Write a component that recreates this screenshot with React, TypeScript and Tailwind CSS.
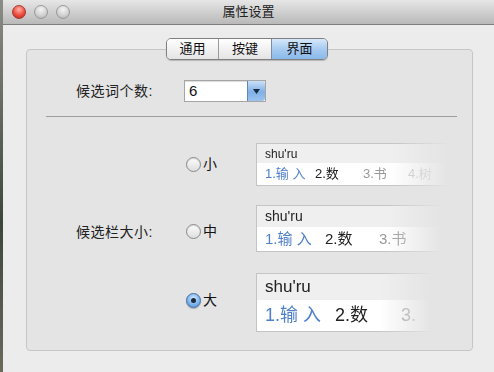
import React from "react";

const cjk = "font-['Liberation_Sans','Noto_Sans_CJK_SC',sans-serif]";

function Radio({ checked }: { checked?: boolean }) {
  if (checked) {
    return (
      <span className="flex h-[15px] w-[15px] items-center justify-center rounded-full border border-[#3f6ea6] bg-[radial-gradient(circle_at_50%_35%,#d6ebff_0%,#7fb4ea_55%,#4d8ad0_100%)] shadow-[0_1px_1px_rgba(0,0,0,0.25)]">
        <span className="h-[5px] w-[5px] rounded-full bg-[#1b2a3c]" />
      </span>
    );
  }
  return (
    <span className="h-[15px] w-[15px] rounded-full border border-[#8a8a8a] bg-[linear-gradient(#fdfdfd,#dedede)] shadow-[inset_0_1px_1px_rgba(0,0,0,0.15)]" />
  );
}

type Size = {
  w: string;
  top: string;
  bottom: string;
  latin: string;
  cand: string;
  c1: string;
  c2: string;
  third: string;
  fourth: boolean;
};

function Preview({ s }: { s: Size }) {
  return (
    <div
      className={`${s.w} overflow-hidden border border-[#c4c4c4] shadow-[0_2px_4px_rgba(0,0,0,0.3)] [mask-image:linear-gradient(to_right,black_70%,transparent_100%)]`}
    >
      <div className={`${s.top} flex items-center bg-[#efefef] px-[8px] text-[#222] ${s.latin}`}>
        shu'ru
      </div>
      <div className={`${s.bottom} flex items-center whitespace-nowrap bg-white px-[8px] ${s.cand}`}>
        <span className={`${s.c1} shrink-0 text-[#4f80c9]`}>1.输 入</span>
        <span className={`${s.c2} shrink-0 text-[#222]`}>2.数</span>
        <span className="w-[45px] shrink-0 text-[#999]">{s.third}</span>
        {s.fourth && <span className="shrink-0 text-[#c8c8c8]">4.树</span>}
      </div>
    </div>
  );
}

const sizes: { label: string; checked?: boolean; s: Size; row: string; pad: string }[] = [
  {
    label: "小",
    row: "h-[62px]",
    pad: "pt-[11px]",
    s: {
      w: "w-[192px]",
      top: "h-[19px]",
      bottom: "h-[22px]",
      latin: "text-[12px]",
      cand: "text-[13px]",
      c1: "w-[50px]",
      c2: "w-[48px]",
      third: "3.书",
      fourth: true,
    },
  },
  {
    label: "中",
    row: "h-[68px]",
    pad: "pt-[16px]",
    s: {
      w: "w-[186px]",
      top: "h-[21px]",
      bottom: "h-[24px]",
      latin: "text-[14px]",
      cand: "text-[15px]",
      c1: "w-[60px]",
      c2: "w-[54px]",
      third: "3.书",
      fourth: false,
    },
  },
  {
    label: "大",
    checked: true,
    row: "h-[72px]",
    pad: "pt-[17px]",
    s: {
      w: "w-[176px]",
      top: "h-[26px]",
      bottom: "h-[31px]",
      latin: "text-[17px]",
      cand: "text-[18px]",
      c1: "w-[70px]",
      c2: "w-[66px]",
      third: "3.",
      fourth: false,
    },
  },
];

export default function App() {
  return (
    <div className={`flex h-[372px] w-[494px] overflow-hidden bg-[#4b5048] ${cjk}`}>
      <div className="w-[3px] bg-[linear-gradient(#8a8c86,#3d463b_60%,#6b6a5d)]" />
      <div className="flex flex-1 flex-col bg-[#ececec]">
        {/* title bar */}
        <div className="relative flex h-[25px] items-center border-b border-[#7d7d7d] bg-[linear-gradient(#e6e6e6,#b9b9b9)]">
          <div className="flex items-center gap-[8px] pl-[9px]">
            <span className="h-[14px] w-[14px] rounded-full border border-[#a53a35] bg-[radial-gradient(circle_at_50%_30%,#ffb1a8_0%,#ee4b3e_55%,#b42218_100%)]" />
            <span className="h-[14px] w-[14px] rounded-full border border-[#9a9a9a] bg-[radial-gradient(circle_at_50%_30%,#f4f4f4_0%,#cfcfcf_60%,#a9a9a9_100%)]" />
            <span className="h-[14px] w-[14px] rounded-full border border-[#9a9a9a] bg-[radial-gradient(circle_at_50%_30%,#f4f4f4_0%,#cfcfcf_60%,#a9a9a9_100%)]" />
          </div>
          <span className="absolute left-0 right-0 text-center text-[13px] text-[#222]">属性设置</span>
        </div>

        <div className="flex flex-1 flex-col pl-[23px] pr-[21px] pt-[13px]">
          {/* tabs */}
          <div className="relative z-10 -mb-[11px] flex justify-center pr-[5px]">
            <div className="flex h-[22px] overflow-hidden rounded-[5px] border border-[#808080] text-[13px] text-[#111] shadow-[0_1px_1px_rgba(0,0,0,0.2)]">
              <span className="flex w-[52px] items-center justify-center border-r border-[#9a9a9a] bg-[linear-gradient(#ffffff,#e4e4e4)]">通用</span>
              <span className="flex w-[53px] items-center justify-center border-r border-[#7a8ea8] bg-[linear-gradient(#ffffff,#e4e4e4)]">按键</span>
              <span className="flex w-[55px] items-center justify-center bg-[linear-gradient(#d6e8fb,#a7cbf0_50%,#8ab9ea)]">界面</span>
            </div>
          </div>

          {/* group box */}
          <div className="mb-[21px] flex h-[302px] flex-col rounded-[4px] border border-[#c6c6c6] bg-[#e4e4e4]">
            <div className="mt-[30px] flex h-[22px] items-center">
              <span className="w-[126px] text-right text-[14px] tracking-[0.5px] text-[#222]">候选词个数:</span>
              <div className="ml-[31px] flex h-[22px] w-[82px] border border-[#a5a5a5] bg-white shadow-[inset_0_1px_1px_rgba(0,0,0,0.15)]">
                <span className="flex-1 pl-[4px] text-[15px] leading-[20px] text-[#111]">6</span>
                <span className="flex w-[18px] items-center justify-center rounded-r-[3px] border-l border-[#5f87b8] bg-[linear-gradient(#c9e0f8,#7fb0e6_55%,#9cc4ee)]">
                  <svg width="7" height="5" viewBox="0 0 7 5">
                    <path d="M0 0h7L3.5 5z" fill="#1a2b40" />
                  </svg>
                </span>
              </div>
            </div>

            <div className="ml-[19px] mr-[15px] mt-[14px] h-px bg-[#9d9d9d]" />

            <div className="mt-[26px] flex">
              <div className="w-[126px] pt-[79px] text-right text-[14px] tracking-[0.5px] text-[#222]">候选栏大小:</div>
              <div className="flex flex-col">
                {sizes.map((r) => (
                  <div key={r.label} className={`flex items-start ${r.row}`}>
                    <div className={`ml-[33px] flex w-[70px] items-center gap-[2px] ${r.pad}`}>
                      <Radio checked={r.checked} />
                      <span className="text-[14px] text-[#111]">{r.label}</span>
                    </div>
                    <Preview s={r.s} />
                  </div>
                ))}
              </div>
            </div>
          </div>
        </div>
      </div>
    </div>
  );
}
